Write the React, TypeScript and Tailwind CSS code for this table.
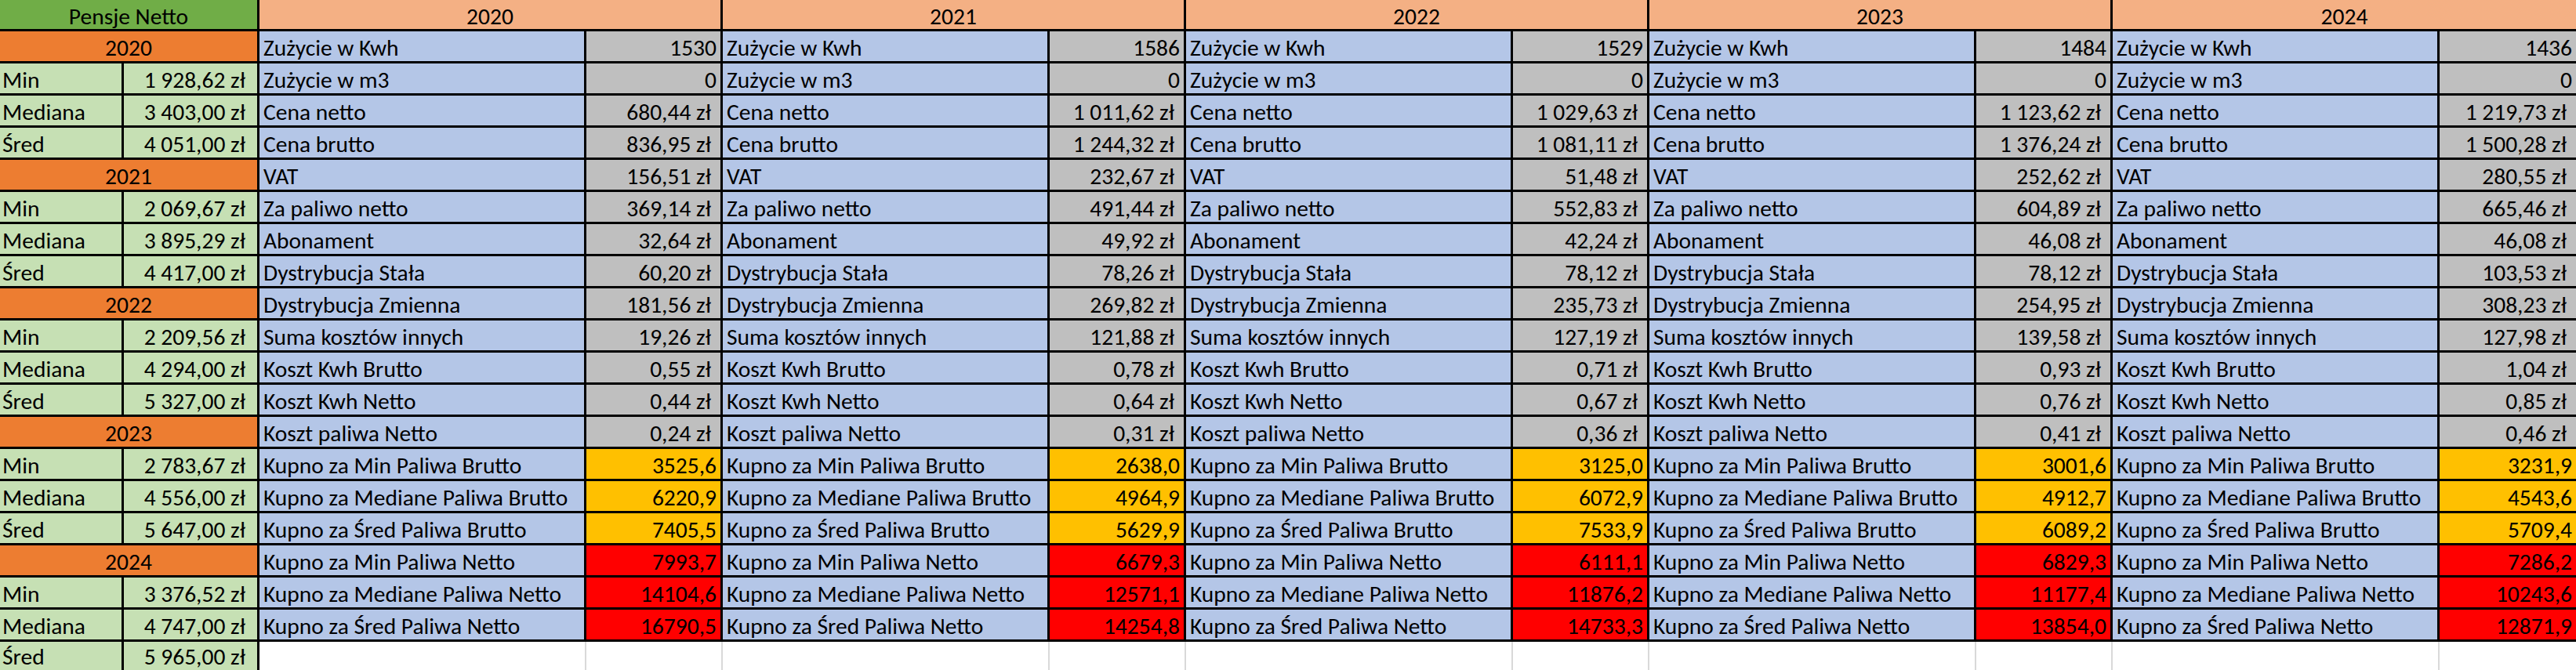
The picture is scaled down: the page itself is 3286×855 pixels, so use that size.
import React from "react";

const labels = [
  "Zużycie w Kwh",
  "Zużycie w m3",
  "Cena netto",
  "Cena brutto",
  "VAT",
  "Za paliwo netto",
  "Abonament",
  "Dystrybucja Stała",
  "Dystrybucja Zmienna",
  "Suma kosztów innych",
  "Koszt Kwh Brutto",
  "Koszt Kwh Netto",
  "Koszt paliwa Netto",
  "Kupno za Min Paliwa Brutto",
  "Kupno za Mediane Paliwa Brutto",
  "Kupno za Śred Paliwa Brutto",
  "Kupno za Min Paliwa Netto",
  "Kupno za Mediane Paliwa Netto",
  "Kupno za Śred Paliwa Netto",
];

const years: { year: string; values: string[] }[] = [
  {
    year: "2020",
    values: ["1530", "0", "680,44 zł", "836,95 zł", "156,51 zł", "369,14 zł", "32,64 zł", "60,20 zł", "181,56 zł", "19,26 zł", "0,55 zł", "0,44 zł", "0,24 zł", "3525,6", "6220,9", "7405,5", "7993,7", "14104,6", "16790,5"],
  },
  {
    year: "2021",
    values: ["1586", "0", "1 011,62 zł", "1 244,32 zł", "232,67 zł", "491,44 zł", "49,92 zł", "78,26 zł", "269,82 zł", "121,88 zł", "0,78 zł", "0,64 zł", "0,31 zł", "2638,0", "4964,9", "5629,9", "6679,3", "12571,1", "14254,8"],
  },
  {
    year: "2022",
    values: ["1529", "0", "1 029,63 zł", "1 081,11 zł", "51,48 zł", "552,83 zł", "42,24 zł", "78,12 zł", "235,73 zł", "127,19 zł", "0,71 zł", "0,67 zł", "0,36 zł", "3125,0", "6072,9", "7533,9", "6111,1", "11876,2", "14733,3"],
  },
  {
    year: "2023",
    values: ["1484", "0", "1 123,62 zł", "1 376,24 zł", "252,62 zł", "604,89 zł", "46,08 zł", "78,12 zł", "254,95 zł", "139,58 zł", "0,93 zł", "0,76 zł", "0,41 zł", "3001,6", "4912,7", "6089,2", "6829,3", "11177,4", "13854,0"],
  },
  {
    year: "2024",
    values: ["1436", "0", "1 219,73 zł", "1 500,28 zł", "280,55 zł", "665,46 zł", "46,08 zł", "103,53 zł", "308,23 zł", "127,98 zł", "1,04 zł", "0,85 zł", "0,46 zł", "3231,9", "4543,6", "5709,4", "7286,2", "10243,6", "12871,9"],
  },
];

const pensje = [
  { year: "2020", vals: ["1 928,62 zł", "3 403,00 zł", "4 051,00 zł"] },
  { year: "2021", vals: ["2 069,67 zł", "3 895,29 zł", "4 417,00 zł"] },
  { year: "2022", vals: ["2 209,56 zł", "4 294,00 zł", "5 327,00 zł"] },
  { year: "2023", vals: ["2 783,67 zł", "4 556,00 zł", "5 647,00 zł"] },
  { year: "2024", vals: ["3 376,52 zł", "4 747,00 zł", "5 965,00 zł"] },
];
const stat = ["Min", "Mediana", "Śred"];

function valueBg(i: number) {
  if (i >= 16) return "bg-[#ff0000]";
  if (i >= 13) return "bg-[#ffc000]";
  return "bg-[#bfbfbf]";
}

function GridLine() {
  return (
    <div className="w-[3px] shrink-0 flex justify-center">
      <div className="w-[2px] bg-[#d9d9d9]" />
    </div>
  );
}

export default function App() {
  const cells: React.ReactNode[] = [];
  cells.push(
    <div key="h-p" className="col-span-2 bg-[#70ad47] flex items-center justify-center pt-[6px]">
      Pensje Netto
    </div>
  );
  years.forEach((y) =>
    cells.push(
      <div key={"h" + y.year} className="col-span-2 bg-[#f4b084] flex items-center justify-center pt-[6px]">
        {y.year}
      </div>
    )
  );
  for (let r = 0; r < 20; r++) {
    const block = Math.floor(r / 4);
    const sub = r % 4;
    const last = r === 19;
    const pt = last ? "pt-[4px]" : "pt-[6px]";
    if (sub === 0) {
      cells.push(
        <div key={"ly" + r} className="col-span-2 bg-[#ed7d31] flex items-center justify-center pt-[6px]">
          {pensje[block].year}
        </div>
      );
    } else {
      cells.push(
        <div key={"ls" + r} className={`bg-[#c6e0b4] flex items-center pl-[3px] ${pt}`}>
          {stat[sub - 1]}
        </div>
      );
      cells.push(
        <div key={"lv" + r} className={`bg-[#c6e0b4] flex items-center justify-end pr-[15px] whitespace-nowrap ${pt}`}>
          {pensje[block].vals[sub - 1]}
        </div>
      );
    }
    if (!last) {
      years.forEach((y) => {
        const v = y.values[r];
        cells.push(
          <div key={"rl" + y.year + r} className="bg-[#b4c6e7] flex items-center pl-[5px] pt-[6px] whitespace-nowrap overflow-hidden">
            {labels[r]}
          </div>
        );
        cells.push(
          <div
            key={"rv" + y.year + r}
            className={`${valueBg(r)} flex items-center justify-end pt-[6px] whitespace-nowrap overflow-hidden ${v.endsWith("zł") ? "pr-[12px]" : "pr-[5px]"}`}
          >
            {v}
          </div>
        );
      });
    } else {
      cells.push(
        <div key="white" className="col-span-10 bg-white flex">
          {years.map((y, i) => (
            <React.Fragment key={"w" + y.year}>
              <div className="w-[414px] shrink-0" />
              <GridLine />
              <div className={i === 4 ? "grow" : "w-[171px] shrink-0"} />
              {i < 4 && <GridLine />}
            </React.Fragment>
          ))}
        </div>
      );
    }
  }

  return (
    <div className="relative w-[3286px] h-[855px] overflow-hidden bg-white">
      <div className="grid grid-cols-[155px_170px_414px_171px_414px_171px_414px_171px_414px_171px_414px_174px] grid-rows-[37px_repeat(19,38px)_36px] gap-[3px] bg-black text-black text-[29.5px] leading-none font-[Carlito,Calibri,'Liberation_Sans',sans-serif] w-[3286px]">
        {cells}
      </div>
    </div>
  );
}
